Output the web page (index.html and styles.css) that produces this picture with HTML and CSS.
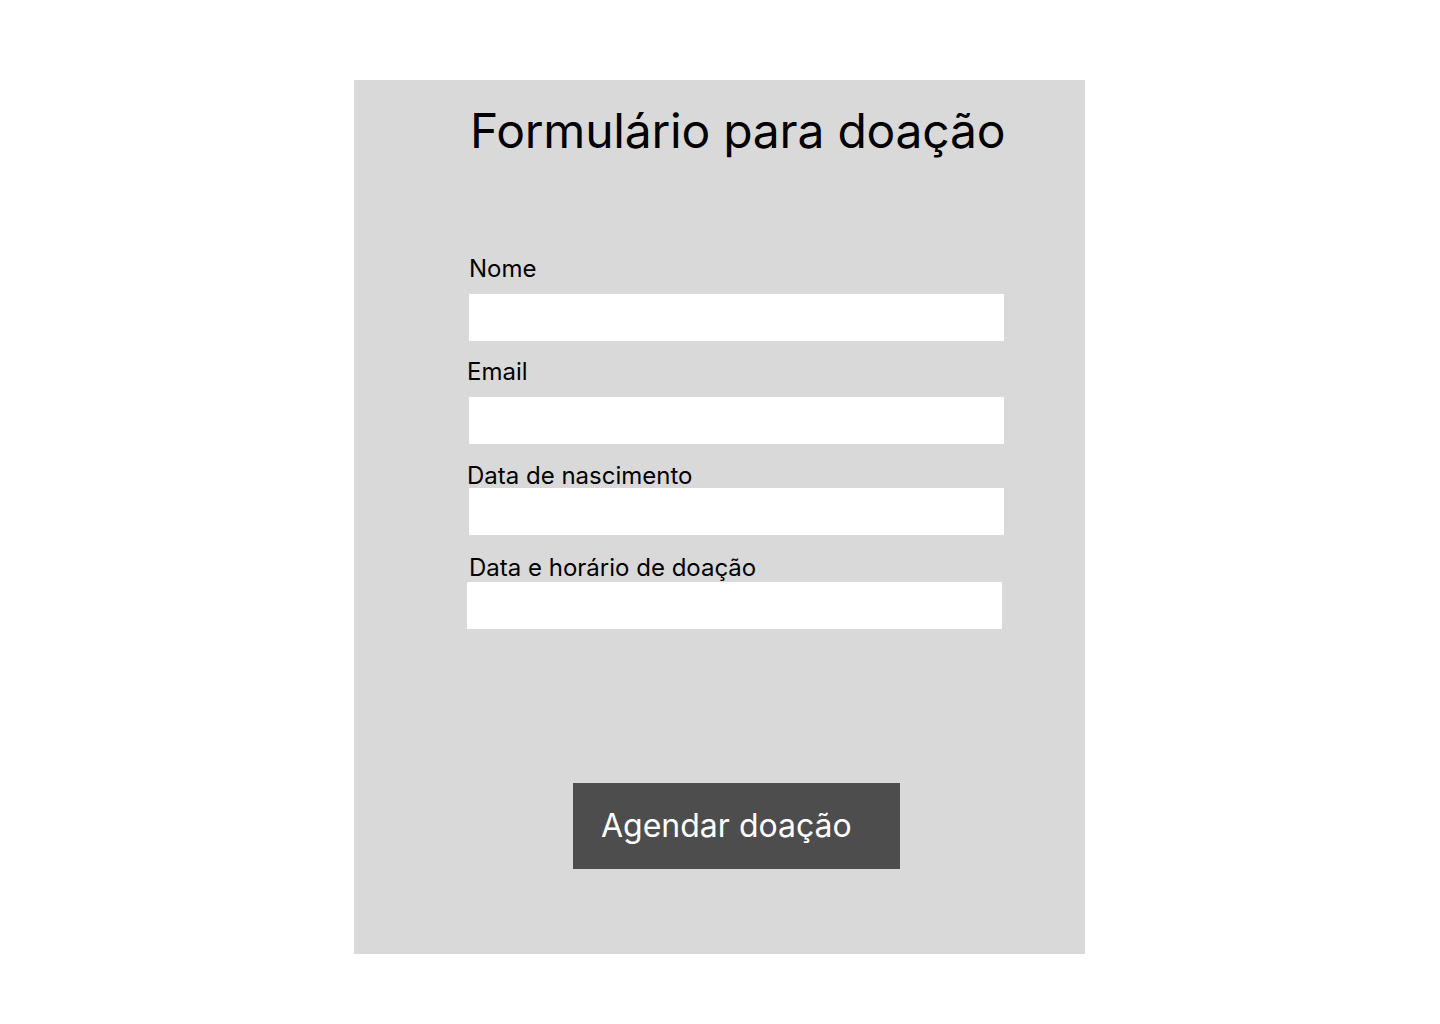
FILE: index.html
```html
<!DOCTYPE html>
<html lang="pt-BR">
<head>
<meta charset="utf-8">
<title>Formulário para doação</title>
<link rel="stylesheet" href="styles.css">
</head>
<body>
  <main class="panel">
    <form class="form">
      <h1 class="title">Formulário para doação</h1>
      <label class="label label-nome" for="nome">Nome</label>
      <input class="field field-nome" id="nome" type="text">
      <label class="label label-email" for="email">Email</label>
      <input class="field field-email" id="email" type="text">
      <label class="label label-nasc" for="nasc">Data de nascimento</label>
      <input class="field field-nasc" id="nasc" type="text">
      <label class="label label-doacao" for="doacao">Data e horário de doação</label>
      <input class="field field-doacao" id="doacao" type="text">
      <div class="actions">
        <button class="btn" type="button">Agendar doação</button>
      </div>
    </form>
  </main>
</body>
</html>
```

FILE: styles.css
```css
* { box-sizing: border-box; }
html, body { margin: 0; padding: 0; background: #ffffff; }
body {
  font-family: Inter, "Noto Sans", sans-serif;
  color: #000;
  width: 1440px;
  height: 1024px;
  padding-top: 80px;
}
.panel {
  margin-left: 354px;
  width: 731px;
  height: 874px;
  background: #d9d9d9;
  padding-top: 22px;
  padding-left: 115px;
}
.form {
  width: 535px;
  display: flex;
  flex-direction: column;
}
.title {
  margin: 0;
  font-weight: 400;
  font-size: 48px;
  line-height: 58px;
  letter-spacing: -0.23px;
  text-align: center;
  white-space: nowrap;
  padding-left: 1px;
}
.label {
  display: block;
  font-size: 24px;
  line-height: 29px;
  white-space: nowrap;
}
.field {
  display: block;
  width: 535px;
  height: 47px;
  border: none;
  background: #fff;
  margin: 0;
  padding: 0 12px;
  font: inherit;
  outline: none;
}
.label-nome { margin-top: 94px; }
.field-nome { margin-top: 11px; }
.label-email { margin-top: 16px; margin-left: -2px; }
.field-email { margin-top: 11px; }
.label-nasc { margin-top: 17px; margin-left: -2px; }
.field-nasc { margin-top: -2px; }
.label-doacao { margin-top: 18px; }
.field-doacao { margin-top: 0; margin-left: -2px; }
.actions {
  margin-top: 154px;
  padding-left: 104px;
}
.btn {
  width: 327px;
  height: 86px;
  border: none;
  border-radius: 0;
  background: #4d4d4d;
  color: #fff;
  font-family: inherit;
  font-size: 32px;
  text-align: left;
  padding: 0 0 2px 28px;
  cursor: pointer;
}
```
